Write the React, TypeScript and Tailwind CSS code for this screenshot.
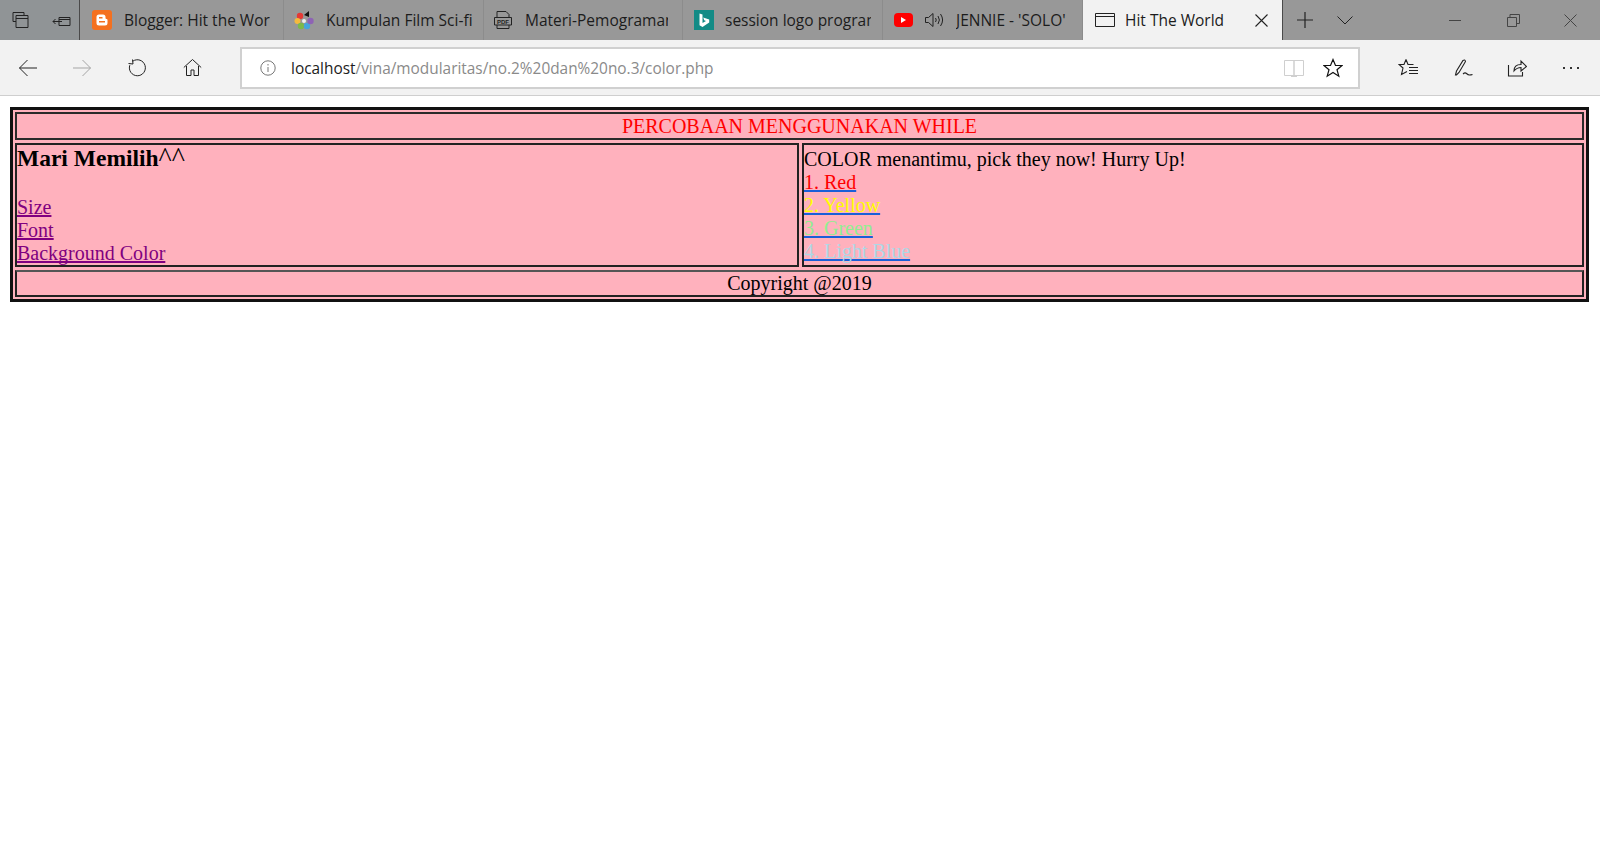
import React from "react";

const ui = { fontFamily: '"Open Sans", "Noto Sans", sans-serif' };
const serif = { fontFamily: '"Liberation Serif", "Times New Roman", serif' };

function Svg({ w = 20, h = 20, children, className = "" }: { w?: number; h?: number; children: React.ReactNode; className?: string }) {
  return (
    <svg width={w} height={h} viewBox={`0 0 ${w} ${h}`} fill="none" stroke="currentColor" strokeWidth="1" className={className}>
      {children}
    </svg>
  );
}

function Tab({ w, icon, label, textW, gap, extra }: { w: string; icon: React.ReactNode; label: string; textW: string; gap: string; extra?: React.ReactNode }) {
  return (
    <div className={`${w} h-10 flex items-center pl-[10px] border-r border-[#8c8c8c] shrink-0`}>
      {icon}
      {extra}
      <span className={`${gap} ${textW} pt-px overflow-hidden whitespace-nowrap text-[15.500px] text-[#1c1c1c]`}>{label}</span>
    </div>
  );
}

const linkBase = "underline [text-decoration-skip-ink:none] [width:fit-content]";

export default function App() {
  return (
    <div className="w-[1600px] h-[850px] bg-white overflow-hidden">
      <div className="h-10 flex bg-[#989898]" style={ui}>
        <div className="w-20 h-10 flex items-center bg-[#909496] border-r border-[#4a4a4a] shrink-0 text-[#222]">
          <Svg className="ml-[11px]">
            <path d="M2 2.500h11v3M2 2.500v9h3" />
            <path d="M5 5.500h12v12H5zM5 8.500h12" />
          </Svg>
          <Svg className="ml-[21px]">
            <path d="M7 7.500h11v8H7zM7 9.500h11M1 11.500h9M3.500 9l-2.500 2.500 2.500 2.500" />
          </Svg>
        </div>

        <Tab
          w="w-[204px]"
          textW="w-[146px]"
          gap="ml-[12px]"
          label="Blogger: Hit the World"
          icon={
            <div className="ml-[2px] w-5 h-5 rounded-[3px] bg-[#f4701f] flex items-center justify-center">
              <svg width="12" height="12" viewBox="0 0 12 12">
                <path d="M3 0.500h4a2.500 2.500 0 0 1 2.500 2.500v1a1 1 0 0 0 1 1 1 1 0 0 1 1 1v3a2.500 2.500 0 0 1-2.500 2.500H3A2.500 2.500 0 0 1 0.500 9V3A2.500 2.500 0 0 1 3 .500z" fill="#fff" />
                <rect x="3" y="3" width="3.500" height="1.500" fill="#f4701f" />
                <rect x="3" y="7" width="6" height="1.500" fill="#f4701f" />
              </svg>
            </div>
          }
        />
        <Tab
          w="w-[200px]"
          textW="w-[146px]"
          gap="ml-[12px]"
          label="Kumpulan Film Sci-fiction"
          icon={
            <svg width="20" height="22" viewBox="0 0 20 22">
              <circle cx="6" cy="7" r="3.200" fill="#e53935" />
              <circle cx="3.500" cy="12" r="3" fill="#f5b93e" />
              <circle cx="7" cy="17" r="3.200" fill="#7cb94a" />
              <circle cx="13" cy="17" r="3.200" fill="#45a5dc" />
              <circle cx="16.500" cy="12" r="3.200" fill="#8e63b5" />
              <path d="M10 6 L15 2 L15 8 Z" fill="#111" />
              <circle cx="10" cy="12" r="2" fill="#eee" />
            </svg>
          }
        />
        <Tab
          w="w-[199px]"
          textW="w-[143px]"
          gap="ml-[12px]"
          label="Materi-Pemograman"
          icon={
            <svg width="20" height="20" viewBox="0 0 20 20" fill="none" stroke="#222" strokeWidth="1" className="ml-[-1px]">
              <path d="M4 7V1.500h9l3 3V7M4 15v3.500h12V15M1.500 7.500h17v7.500h-17z" />
              <text x="10" y="13.500" fontSize="6" fontWeight="700" fill="#222" stroke="none" textAnchor="middle" fontFamily="Liberation Sans">PDF</text>
            </svg>
          }
        />
        <Tab
          w="w-[200px]"
          textW="w-[146px]"
          gap="ml-[11px]"
          label="session logo programming"
          icon={
            <div className="w-5 h-5 bg-[#138b86] flex items-center justify-center ml-[1px]">
              <svg width="12" height="16" viewBox="0 0 12 16">
                <path d="M1.500 1.500l3 1v8.500l3.500-2-1.800-.8-1-2.600 6 2v2.800L4.500 15l-3-1.700z" fill="#fff" />
              </svg>
            </div>
          }
        />
        <Tab
          w="w-[200px]"
          textW="w-[114px]"
          gap="ml-[11px]"
          label="JENNIE - 'SOLO' M/V"
          icon={
            <div className="ml-px w-[19px] h-[14px] rounded-[4px] bg-[#f00] flex items-center justify-center">
              <div className="w-0 h-0 border-y-[3px] border-y-transparent border-l-[5px] border-l-white" />
            </div>
          }
          extra={
            <Svg w={21} h={20} className="ml-[11px] text-[#222]">
              <path d="M1.500 7.500h3L9 3.500v13l-4.500-4h-3z" />
              <path d="M11.500 8q1.500 2 0 4M14 6q2.800 4 0 8M16.500 4q4.200 6 0 12" />
            </Svg>
          }
        />
        <div className="w-[200px] h-10 bg-[#f2f2f2] flex items-center shrink-0 border-r border-[#4a4a4a] text-[#222]">
          <Svg w={20} h={20} className="ml-[12px]">
            <path d="M.500 3.500h19v13H.5zM.5 6.500h19" />
          </Svg>
          <span className="ml-[10px] pt-px w-[116px] text-[15.500px] text-[#1c1c1c] whitespace-nowrap">Hit The World</span>
          <Svg w={13} h={13} className="ml-[14px]">
            <path d="M.5.500l12 12M12.500.5l-12 12" strokeWidth="1.100" />
          </Svg>
        </div>
        <div className="flex-1 flex items-center text-[#222]">
          <Svg w={18} h={18} className="ml-[13px]">
            <path d="M9 1v16M1 9h16" strokeWidth="1.200" />
          </Svg>
          <Svg w={16} h={10} className="ml-[23px]">
            <path d="M.5 1.500l7.500 7.500 7.500-7.500" />
          </Svg>
          <div className="ml-[96px] w-3 h-px bg-[#444]" />
          <Svg w={13} h={13} className="ml-[46px] text-[#444]">
            <path d="M.5 3.500h9v9h-9zM3 3.500V.5h9.500v9H9.500" />
          </Svg>
          <Svg w={13} h={13} className="ml-[44px] text-[#444]">
            <path d="M.5.500l12 12M12.500.5l-12 12" />
          </Svg>
        </div>
      </div>

      <div className="h-[56px] bg-[#f2f2f2] border-b border-[#cfcfcf] flex items-center text-[#222]" style={ui}>
        <Svg w={20} h={18} className="ml-[18px]">
          <path d="M19 9H1.500M9.500 1L1.500 9l8 8" />
        </Svg>
        <Svg w={20} h={18} className="ml-[34px] text-[#a5a5a5]">
          <path d="M1 9h17.500M10.500 1l8 8-8 8" />
        </Svg>
        <Svg w={19} h={19} className="ml-[35px]">
          <path d="M5.500 1.500l.5 4.500-4.500-.5" />
          <path d="M5.800 3.200a8 8 0 1 1-3 4" />
        </Svg>
        <Svg w={19} h={19} className="ml-[37px]">
          <path d="M.8 9.500L9.500 1.500l8.700 8M3.500 8v9.500h4.500v-5.500h3v5.500h4.500V8" />
        </Svg>
        <div className="ml-[38px] w-[1120px] h-[42px] bg-white border-2 border-[#d0d0d0] flex items-center">
          <Svg w={16} h={16} className="ml-[18px] text-[#777]">
            <circle cx="8" cy="8" r="7.200" />
            <path d="M8 7v5M8 4v1.500" />
          </Svg>
          <span className="ml-[15px] pt-[3px] text-[15.400px] whitespace-nowrap text-[#1c1c1c]">
            localhost<span className="text-[#8a8a8a]">/vina/modularitas/no.2%20dan%20no.3/color.php</span>
          </span>
          <div className="flex-1" />
          <Svg w={20} h={20} className="text-[#cfcfcf]">
            <path d="M.5 2.500h9.500v15H.5zM10 2.500h9.500v15H10zM7 18.500h6" />
          </Svg>
          <Svg w={20} h={20} className="ml-[19px] mr-[15px] text-[#111]">
            <path d="M10 1.500l2.500 6h6.500l-5 4.200 1.800 6.500L10 14.500l-5.800 3.700L6 11.700 1 7.500h6.500z" strokeWidth="1.200" />
          </Svg>
        </div>
        <Svg w={21} h={20} className="ml-[38px]">
          <path d="M8 1.500L10 6.500H15.500M8 1.500L6 6.500H1L5 10 3.500 16.500 9 13.500M11 9.500h9M11 12.500h9M11 15.500h9" strokeWidth="1.100" />
        </Svg>
        <Svg w={20} h={20} className="ml-[35px]">
          <path d="M1.500 17l1-4L9 2.500q2-1.500 2.500 1L5 14.500l-2.500 2.500zM9 16q2-2 3.500-.5t3 1.500 3-.5" strokeWidth="1.100" />
        </Svg>
        <Svg w={20} h={20} className="ml-[33px]">
          <path d="M1.500 7v11h14v-4M7 13q0-6.500 7-6.500V3l5.500 5.500L14 13V9.500q-4 0-7 3.500z" strokeWidth="1.100" />
        </Svg>
        <div className="ml-[36px] flex gap-[5px]">
          <div className="w-[2px] h-[2px] bg-[#333]" />
          <div className="w-[2px] h-[2px] bg-[#333]" />
          <div className="w-[2px] h-[2px] bg-[#333]" />
        </div>
      </div>

      <div className="pt-[11px] pl-[10px] pr-[11px]" style={serif}>
        <div className="bg-[#ffb1bd] border-[3px] border-[#111] p-[2px] grid grid-cols-[784px_1fr] gap-[3px] text-[20px] leading-[23px] text-black">
          <div className="col-span-2 h-7 border-2 border-[#2a2a2a] text-center text-[#f00] pt-px">PERCOBAAN MENGGUNAKAN WHILE</div>
          <div className="border-2 border-[#222] h-[124px]">
            <div className="h-[28px] leading-[24px]">
              <span className="font-bold text-[23.500px]">Mari Memilih</span>
              <span className="text-[28px]">^^</span>
            </div>
            <div className="h-[23px]" />
            <div className={`${linkBase} text-[#800080] decoration-[#800080]`}>Size</div>
            <div className={`${linkBase} text-[#800080] decoration-[#800080]`}>Font</div>
            <div className={`${linkBase} text-[#800080] decoration-[#800080]`}>Background Color</div>
          </div>
          <div className="border-2 border-[#222] h-[124px] pt-[3px]">
            <div>COLOR menantimu, pick they now! Hurry Up!</div>
            <div className={`${linkBase} text-[#f00] decoration-[#1a5fd8]`}>1. Red</div>
            <div className={`${linkBase} text-[#ffff00] decoration-[#1a5fd8]`}>2. Yellow</div>
            <div className={`${linkBase} text-[#90ee90] decoration-[#1a5fd8]`}>3. Green</div>
            <div className={`${linkBase} text-[#add8e6] decoration-[#1a5fd8]`}>4. Light Blue</div>
          </div>
          <div className="col-span-2 h-[27px] border-2 border-[#222] border-t-[#555] text-center">Copyright @2019</div>
        </div>
      </div>
    </div>
  );
}
